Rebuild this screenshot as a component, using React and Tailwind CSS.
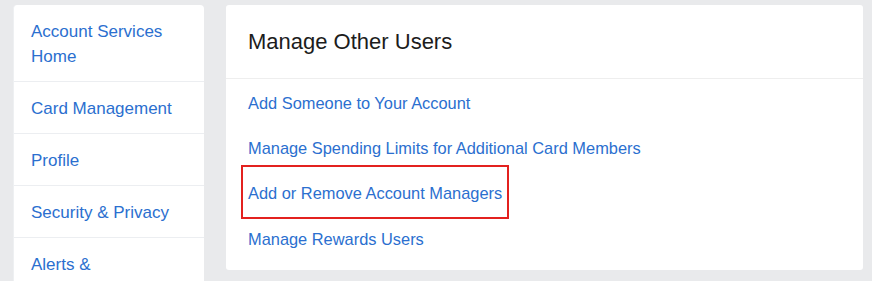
import React from "react"

const sideItems = ["Account Services Home", "Card Management", "Profile", "Security & Privacy", "Alerts & Notifications"]

const links = [
  "Add Someone to Your Account",
  "Manage Spending Limits for Additional Card Members",
  "Add or Remove Account Managers",
  "Manage Rewards Users",
]

export default function App() {
  return (
    <div
      className="w-[872px] h-[281px] overflow-hidden bg-[#e9eaec] flex items-start pt-[5px] pl-[13px] gap-[22px]"
      style={{ fontFamily: '"Liberation Sans", Arial, sans-serif' }}
    >
      {/* Sidebar */}
      <div className="w-[191px] h-[320px] shrink-0 bg-white rounded-t-[4px] border-l border-[#eef0f2]">
        {sideItems.map((item) => (
          <div
            key={item}
            className="px-[17px] pt-[13.5px] pb-[12.5px] text-[17px] leading-[25px] text-[#2b6fcf] border-b border-[#eceef1]"
          >
            {item}
          </div>
        ))}
      </div>

      {/* Main card */}
      <div className="w-[637px] h-[265px] bg-white rounded-[3px]">
        <div className="px-[22px] pt-[23px] pb-[22px] border-b border-[#eeeeee]">
          <h1 className="text-[22px] leading-[28px] text-[#1c1c1c] font-normal">Manage Other Users</h1>
        </div>
        <div className="px-[22px] pt-[1px] pb-[9px]">
          {links.map((link, i) => (
            <div key={link} className="relative py-[10.7px] text-[16.4px] leading-[24px] text-[#2b6fcf]">
              {link}
              {i === 2 && (
                <div className="absolute left-[-7px] top-[-6px] w-[268px] h-[54px] border-2 border-[#e3211f]" />
              )}
            </div>
          ))}
        </div>
      </div>
    </div>
  )
}
